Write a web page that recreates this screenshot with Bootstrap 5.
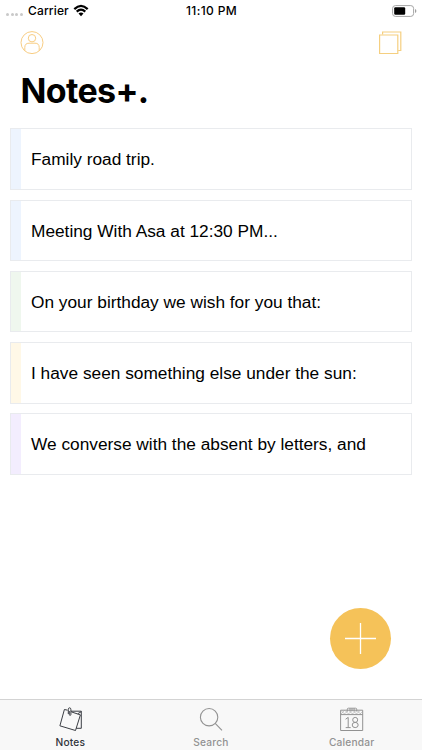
<!DOCTYPE html>
<html lang="en">
<head>
<meta charset="utf-8">
<meta name="viewport" content="width=device-width, initial-scale=1">
<title>Notes+.</title>
<link href="https://cdn.jsdelivr.net/npm/bootstrap@5.3.0/dist/css/bootstrap.min.css" rel="stylesheet">
<style>
body { font-family: Inter, "Liberation Sans", sans-serif; color: #000; background: #fff; }
svg { display: block; flex: none; }
.status-bar { height: 21px; font-size: 12px; font-weight: 500; padding: 0 5px 0 6px; letter-spacing: .12px; }
.clock { letter-spacing: .36px; }
.signal { gap: 1.7px; padding-top: 7px; margin-right: 5px; }
.signal i { width: 3px; height: 3px; border-radius: 50%; background: #c9c9c9; }
.tool-row { height: 44px; padding: 0 19px 0 20px; }
.page-title { font-size: 34px; font-weight: 700; line-height: 42px; margin: 5px 0 16.4px 20.5px; letter-spacing: -.65px; }
.note-list { gap: 9.75px; padding: 0 10px; }
.note { height: 61.5px; border: 1px solid #e9ebee; font: 17.3px/20px "Liberation Sans", Arial, sans-serif; }
.note-tag { width: 10px; background: var(--tag); }
.note-text { padding: .6px 10px 0; }
.tag-blue { --tag: #edf4fe; }
.tag-green { --tag: #eff7ee; }
.tag-yellow { --tag: #fff8e7; }
.tag-purple { --tag: #f3edfe; }
.add-btn { width: 61px; height: 61px; background: #f5c259; margin: 0 31px 30px 0; }
.tab-bar { height: 51px; background: #f8f8f8; border-top: 1px solid #d3d3d3; }
.tab { color: #929292; font-size: 10.2px; font-weight: 500; line-height: 12px; padding-top: 5px; letter-spacing: .2px; }
.tab svg { margin-bottom: 1px; }
.tab.current { color: #30343a; }
</style>
</head>
<body>
<div class="d-flex flex-column vh-100 overflow-hidden">
  <header class="status-bar d-flex align-items-center">
    <div class="d-flex align-items-center col">
      <span class="signal d-flex"><i></i><i></i><i></i><i></i></span>
      <span>Carrier</span>
      <svg class="ms-1" width="17" height="13" viewBox="0 0 17 13" fill="none" stroke="#000" stroke-width="2.2"><path d="M1.3 5.1Q8-1.4 14.7 5.1M3.7 7.6Q8 3.6 12.3 7.6"/><path d="M8 12.2 5.5 9.6Q8 7.5 10.5 9.6Z" fill="#000" stroke="none"/></svg>
    </div>
    <span class="clock">11:10 PM</span>
    <div class="col d-flex justify-content-end">
      <svg width="25" height="12" viewBox="0 0 25 12"><rect x=".6" y=".6" width="21" height="10.8" rx="2.8" fill="#fff" stroke="#a5a5a5"/><rect x="2.2" y="2.2" width="11" height="7.6" rx="1.2"/><path d="M23 4v4q1.4-.6 1.4-2T23 4Z" fill="#a0a0a0"/></svg>
    </div>
  </header>

  <div class="tool-row d-flex justify-content-between align-items-center">
    <svg width="24" height="24" viewBox="0 0 24 24" fill="none" stroke="#f8cd83"><circle cx="12" cy="11.6" r="11"/><circle cx="12" cy="7.2" r="3.7"/><path d="M4.8 19.8v-3.4q0-4.2 4.2-4.2h6q4.2 0 4.2 4.2v3.4"/></svg>
    <svg width="25" height="24" viewBox="0 0 25 24" fill="none" stroke="#f5cf80" stroke-width="1.2"><path d="M1.6 4h18.2v18.5H1.6z"/><path d="M4.600 3.600V1h18.200v18.500h-2.600"/></svg>
  </div>

  <h1 class="page-title">Notes+.</h1>

  <main class="note-list d-flex flex-column">
    <div class="note tag-blue d-flex"><span class="note-tag"></span><span class="note-text align-self-center">Family road trip.</span></div>
    <div class="note tag-blue d-flex"><span class="note-tag"></span><span class="note-text align-self-center">Meeting With Asa at 12:30 PM...</span></div>
    <div class="note tag-green d-flex"><span class="note-tag"></span><span class="note-text align-self-center">On your birthday we wish for you that:</span></div>
    <div class="note tag-yellow d-flex"><span class="note-tag"></span><span class="note-text align-self-center">I have seen something else under the sun:</span></div>
    <div class="note tag-purple d-flex"><span class="note-tag"></span><span class="note-text align-self-center">We converse with the absent by letters, and</span></div>
  </main>

  <button class="add-btn btn rounded-circle border-0 p-0 mt-auto align-self-end d-flex align-items-center justify-content-center" aria-label="Add note">
    <svg width="31" height="31" viewBox="0 0 31 31" stroke="#fff" stroke-width="1.3"><path d="M15.5 0v31M0 15.5h31"/></svg>
  </button>

  <nav class="tab-bar d-flex">
    <a class="tab current col text-decoration-none d-flex flex-column align-items-center">
      <svg width="30" height="30" viewBox="0 0 30 30" fill="none" stroke="currentColor" stroke-width=".95"><path d="M12.600 5.200 9.400 4.500 4.900 20.800l15.600 4.700 4.900-15.600-9-3"/><path d="M16 6.200h10.300v17.100h-5M26.300 6.700l-3.500 2"/><path d="M13.300 9V4.600q0-1.800 1.300-1.800t1.300 1.800v4.800q0 1-.8 1t-.8-1V6"/></svg>
      <span>Notes</span>
    </a>
    <a class="tab col text-decoration-none d-flex flex-column align-items-center">
      <svg width="30" height="30" viewBox="0 0 30 30" fill="none" stroke="currentColor" stroke-width="1.1"><circle cx="13.100" cy="12.200" r="8.700"/><path d="m19.200 18.400 6.800 7"/></svg>
      <span>Search</span>
    </a>
    <a class="tab col text-decoration-none d-flex flex-column align-items-center">
      <svg width="30" height="30" viewBox="0 0 30 30" fill="none" stroke="currentColor"><path d="M3.600 5.200h22.100v20.300H3.600zM3.600 9.600h22.100"/><path d="m4 9 3.500-3.500M7.500 9l3-3M11.500 9l3-3M15.500 9l3-3M19.500 9l3-3M23 9l2.500-2.500M4.500 6l3 3M8.500 6l3 3M12.500 6l3 3M16.500 6l3 3M20.500 6l3 3" stroke-width=".45"/><path d="M10.300 6.500V4.200q0-1 1-1h7.400q1 0 1 1v2.300M13 3.200v3M15 3.200v3M17.100 3.200v3" stroke-width=".9"/><path d="M8.600 14.200l2.600-1.800v10.200M8.700 22.600h5"/><circle cx="18.200" cy="14.900" r="2.500"/><ellipse cx="18.200" cy="20" rx="3" ry="2.600"/></svg>
      <span>Calendar</span>
    </a>
  </nav>
</div>
<script src="https://cdn.jsdelivr.net/npm/bootstrap@5.3.0/dist/js/bootstrap.bundle.min.js"></script>
</body>
</html>
